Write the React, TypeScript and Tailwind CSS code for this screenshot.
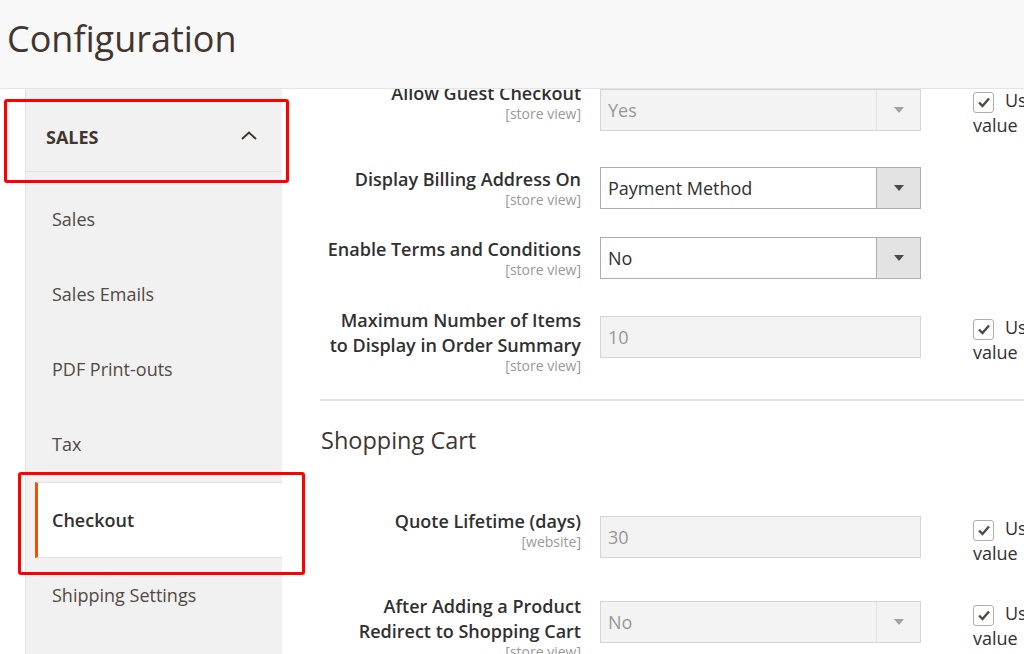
import type { ReactNode } from 'react'

interface FieldRowProps {
  label: ReactNode
  scope: string
  fieldOffset: string
  height: string
  children: ReactNode
  useDefault?: boolean
}

const NAV_ITEMS = ['Sales', 'Sales Emails', 'PDF Print-outs', 'Tax', 'Checkout', 'Shipping Settings']

function Arrow() {
  return (
    <svg width="10" height="6" viewBox="0 0 10 6">
      <path d="M0 0 L10 0 L5 6 Z" fill="#514943" />
    </svg>
  )
}

function Select({ value, disabled }: { value: string; disabled?: boolean }) {
  return (
    <div
      className={
        disabled
          ? 'w-[321px] h-[42px] flex border border-[#adadad] bg-[#e9e9e9] opacity-50'
          : 'w-[321px] h-[42px] flex border border-[#adadad] bg-white'
      }
    >
      <div className="flex-1 flex items-center pl-[7px] text-[#303030]">{value}</div>
      <div
        className={
          disabled
            ? 'w-[44px] flex items-center justify-center border-l border-[#c8c8c8]'
            : 'w-[44px] flex items-center justify-center border-l border-[#adadad] bg-[#e3e3e3]'
        }
      >
        <Arrow />
      </div>
    </div>
  )
}

function TextInput({ value }: { value: string }) {
  return (
    <div className="w-[321px] h-[42px] flex items-center pl-[7px] border border-[#adadad] bg-[#e9e9e9] text-[#303030] opacity-50">
      {value}
    </div>
  )
}

function UseDefault() {
  return (
    <div className="w-[160px] shrink-0 ml-[52px] mt-[7px] text-[#303030]">
      <span className="inline-flex align-middle items-center justify-center w-[21px] h-[21px] border border-[#adadad] rounded-[3px] bg-white">
        <svg width="14" height="12" viewBox="0 0 14 12">
          <path d="M2 6.5 L5.5 10 L12 2.5" fill="none" stroke="#514943" strokeWidth="2.4" />
        </svg>
      </span>
      <span className="ml-[11px]">Use system value</span>
    </div>
  )
}

function FieldRow({ label, scope, fieldOffset, height, children, useDefault }: FieldRowProps) {
  return (
    <div className={`flex ${height}`}>
      <div className="w-[261px] shrink-0 text-right">
        <div className="font-semibold text-[#303030]">{label}</div>
        <div className="text-[14px] leading-[16px] text-[#999999]">{scope}</div>
      </div>
      <div className={`ml-[19px] shrink-0 ${fieldOffset}`}>{children}</div>
      {useDefault && <UseDefault />}
    </div>
  )
}

export default function App() {
  return (
    <div className="relative w-[1024px] h-[654px] overflow-hidden bg-white font-['Open_Sans',sans-serif] text-[18px] leading-[25px]">
      {/* Page title */}
      <header className="h-[89px] bg-[#f8f8f8] border-b border-[#e3e3e3] pl-[7px] pt-[14px]">
        <h1 className="text-[36px] leading-[49px] text-[#41362f]">Configuration</h1>
      </header>

      <div className="flex h-[565px]">
        {/* Config sidebar */}
        <aside className="ml-[25px] w-[257px] shrink-0 bg-[#f1f1f1] border-l border-[#e3e3e3]">
          <div className="h-[83px] border-b border-[#e3e3e3] pt-[34px] pl-[20px] pr-[25px]">
            <div className="flex items-center justify-between h-[25px]">
              <span className="mt-[4px] font-bold text-[#41362f]">SALES</span>
              <svg width="16" height="9" viewBox="0 0 16 9">
                <path d="M1 8 L8 1.5 L15 8" fill="none" stroke="#41362f" strokeWidth="2" />
              </svg>
            </div>
          </div>
          <ul className="pt-[10px]">
            {NAV_ITEMS.map((item) => {
              const isActive = item === 'Checkout'
              return (
                <li
                  key={item}
                  className={
                    isActive
                      ? 'ml-[9px] h-[76px] flex items-center pl-[14px] bg-white border-l-[3px] border-l-[#eb5202] border-y border-y-[#e3e3e3] font-semibold text-[#303030]'
                      : 'ml-[9px] h-[75px] flex items-center pl-[14px] border-l-[3px] border-l-transparent text-[#514943]'
                  }
                >
                  {item}
                </li>
              )
            })}
          </ul>
        </aside>

        {/* Form area */}
        <main className="flex-1 overflow-hidden pl-[38px]">
          <div className="-mt-[8px]">
            <FieldRow label="Allow Guest Checkout" scope="[store view]" fieldOffset="mt-[8px]" height="h-[86px]" useDefault>
              <Select value="Yes" disabled />
            </FieldRow>
            <FieldRow label="Display Billing Address On" scope="[store view]" fieldOffset="mt-0" height="h-[70px]">
              <Select value="Payment Method" />
            </FieldRow>
            <FieldRow label="Enable Terms and Conditions" scope="[store view]" fieldOffset="mt-0" height="h-[71px]">
              <Select value="No" />
            </FieldRow>
            <FieldRow
              label={
                <>
                  Maximum Number of Items
                  <br />
                  to Display in Order Summary
                </>
              }
              scope="[store view]"
              fieldOffset="mt-[8px]"
              height="h-[91px]"
              useDefault
            >
              <TextInput value="10" />
            </FieldRow>

            <div className="h-[2px] bg-[#e3e3e3]" />

            <h2 className="mt-[24px] pl-px text-[23.5px] leading-[30px] text-[#41362f]">Shopping Cart</h2>

            <div className="mt-[54px]">
              <FieldRow label="Quote Lifetime (days)" scope="[website]" fieldOffset="mt-[7px]" height="h-[85px]" useDefault>
                <TextInput value="30" />
              </FieldRow>
              <FieldRow
                label={
                  <>
                    After Adding a Product
                    <br />
                    Redirect to Shopping Cart
                  </>
                }
                scope="[store view]"
                fieldOffset="mt-[7px]"
                height="h-[85px]"
                useDefault
              >
                <Select value="No" disabled />
              </FieldRow>
            </div>
          </div>
        </main>
      </div>

      {/* Annotation boxes */}
      <div className="absolute left-[4px] top-[99px] w-[285px] h-[84px] border-[3px] border-[#ff0000] rounded-[3px]" />
      <div className="absolute left-[18px] top-[472px] w-[287px] h-[103px] border-[3px] border-[#ff0000] rounded-[3px]" />
    </div>
  )
}
